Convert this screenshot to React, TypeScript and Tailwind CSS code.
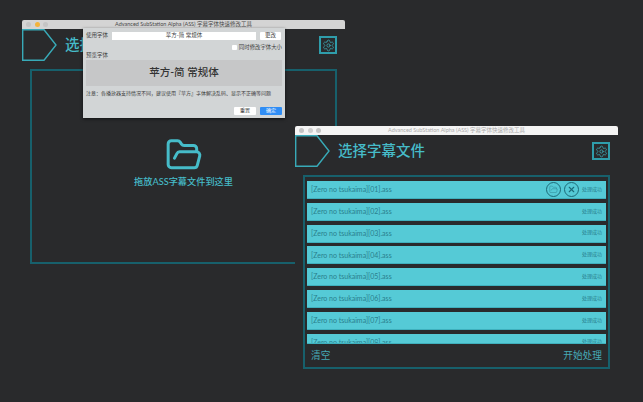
import { FolderOpen, Settings, X } from "lucide-react";

const FONT = "font-['Lato','Noto_Sans_CJK_SC',sans-serif]";
const TITLE = "Advanced SubStation Alpha (ASS) 字幕字体快速修改工具";

function TitleBar({ active }: { active?: boolean }) {
  return (
    <div
      className={`flex h-[9px] items-center rounded-t-[2px] px-[4px] ${
        active ? "bg-[#d4d4d4]" : "bg-[#f4f4f4]"
      }`}
    >
      <div className="flex w-0 gap-[3.5px]">
        <span className="h-[5px] w-[5px] shrink-0 rounded-full bg-[#c4c4c4]" />
        <span className={`h-[5px] w-[5px] shrink-0 rounded-full ${active ? "bg-[#f2b33c]" : "bg-[#cfcfcf]"}`} />
        <span className="h-[5px] w-[5px] shrink-0 rounded-full bg-[#c4c4c4]" />
      </div>
      <p className={`flex-1 text-center text-[5.5px] leading-none ${active ? "text-[#4a4a4a]" : "text-[#ababab]"}`}>
        {TITLE}
      </p>
    </div>
  );
}

function Pentagon() {
  return (
    <svg width="35" height="32" viewBox="0 0 35 32" className="shrink-0">
      <path d="M0.7 0.7H22L34 16L22 31.3H0.7Z" fill="none" stroke="#38aab8" strokeWidth="1.4" />
    </svg>
  );
}

function GearBox() {
  return (
    <div className="flex h-[18px] w-[18px] items-center justify-center border-2 border-[#2f9dab]">
      <Settings size={13} strokeWidth={1.3} className="text-[#3fb3c0]" />
    </div>
  );
}

function Header() {
  return (
    <div className="flex items-center pr-[8px]">
      <Pentagon />
      <h1 className="ml-[8px] flex-1 text-[14.5px] font-medium leading-none text-[#46bcc9]">选择字幕文件</h1>
      <GearBox />
    </div>
  );
}

function FileRow({ n, hover }: { n: string; hover?: boolean }) {
  return (
    <div className="flex h-[18px] shrink-0 items-center border-b border-[#3fb0bd] bg-[#55cad6] px-[4px]">
      <span className="flex-1 text-[7px] text-[#2a7f8d]">[Zero no tsukaima][{n}].ass</span>
      {hover && (
        <div className="mr-[3px] flex gap-[3.5px]">
          <span className="flex h-[14.5px] w-[14.5px] items-center justify-center rounded-full border-[1.5px] border-[#1d6b78]">
            <FolderOpen size={9} strokeWidth={1.2} className="text-[#2a7f8d]" />
          </span>
          <span className="flex h-[14.5px] w-[14.5px] items-center justify-center rounded-full border-[1.5px] border-[#1d6b78]">
            <X size={9} strokeWidth={3} className="text-[#1d6b78]" />
          </span>
        </div>
      )}
      <span className="text-[5px] text-[#2a7f8d]">处理成功</span>
    </div>
  );
}

export default function App() {
  const rows = ["01", "02", "03", "04", "05", "06", "07", "08"];
  return (
    <div className={`relative h-[402px] w-[643px] overflow-hidden bg-[#292a2c] ${FONT}`}>
      {/* back window */}
      <div className="absolute left-[22px] top-[20px] w-[323px]">
        <TitleBar active />
        <Header />
        <div className="mx-[8px] mt-[8px] flex h-[195px] flex-col items-center justify-center border-2 border-[#17606c] pb-[10px]">
          <FolderOpen size={38} strokeWidth={1.9} className="text-[#46bcc9]" />
          <p className="mt-[3px] text-[9.2px] font-medium leading-none text-[#46bcc9]">拖放ASS字幕文件到这里</p>
        </div>
      </div>

      {/* font dialog */}
      <div className="absolute left-[83px] top-[28px] h-[90px] w-[202px] bg-[#d2d5d6] px-[3px] pt-[4px] text-[#3d3d3d] shadow-[0_1px_3px_rgba(0,0,0,0.6)]">
        <div className="flex items-center">
          <span className="w-[26px] text-[5.5px] leading-none">使用字体</span>
          <div className="flex h-[8px] w-[144px] items-center justify-center bg-white text-[5.5px] leading-none">苹方-简 常规体</div>
          <div className="ml-[4px] flex h-[8px] w-[21px] items-center justify-center rounded-[1px] bg-white text-[5.5px] leading-none">更改</div>
        </div>
        <div className="mt-[5px] flex items-center justify-end gap-[2px]">
          <span className="h-[5px] w-[5px] rounded-[1px] bg-white" />
          <span className="text-[5.4px] leading-none">同时修改字体大小</span>
        </div>
        <p className="mt-[3px] text-[5.5px] leading-none">预览字体</p>
        <div className="mt-[1px] flex h-[26px] items-center justify-center bg-[#c6c7c8] text-[10.5px] font-medium text-[#333333]">
          苹方-简 常规体
        </div>
        <p className="mt-[5px] text-[5px] leading-none">注意：各播放器支持情况不同，建议使用『苹方』字体解决乱码、显示不正确等问题</p>
        <div className="mt-[11px] flex justify-end gap-[4px]">
          <span className="flex h-[8px] w-[22px] items-center justify-center rounded-[1px] bg-white text-[5px] leading-none">重置</span>
          <span className="flex h-[8px] w-[22px] items-center justify-center rounded-[1px] bg-[#2f8df5] text-[5px] leading-none text-white">确定</span>
        </div>
      </div>

      {/* front window */}
      <div className="absolute left-[295px] top-[126px] w-[323px] bg-[#292a2c] pb-[7px]">
        <TitleBar />
        <Header />
        <div className="mx-[8px] mt-[8px] flex h-[194px] flex-col border-2 border-[#17606c] px-[2px] pt-[4px]">
          <div className="flex h-[163px] flex-col gap-[3.8px] overflow-hidden border-b border-[#3fb0bd]">
            {rows.map((n, i) => (
              <FileRow key={n} n={n} hover={i === 0} />
            ))}
          </div>
          <div className="flex flex-1 items-center justify-between px-[4px] pb-[1px] text-[9.7px] text-[#46a9b5]">
            <span>清空</span>
            <span>开始处理</span>
          </div>
        </div>
      </div>
    </div>
  );
}
